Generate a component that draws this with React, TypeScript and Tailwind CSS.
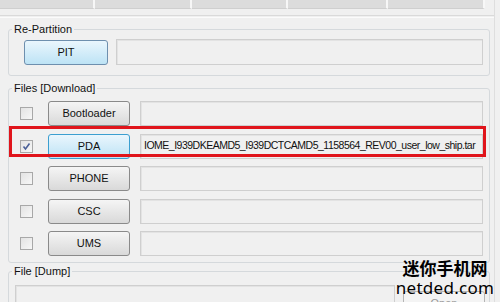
import React from "react";

const font = { fontFamily: '"Liberation Sans", Arial, sans-serif' };

function WinButton({ label, active, className = "" }: { label: string; active?: boolean; className?: string }) {
  return (
    <div
      className={
        "shrink-0 flex items-center justify-center rounded-[3px] border text-[11px] text-[#111] " +
        (active
          ? "border-[#3c9fd0] bg-gradient-to-b from-[#eaf6fd] to-[#bde3f5] "
          : "border-[#8a8a8a] bg-gradient-to-b from-[#f5f5f5] to-[#d9d9d9] ") +
        className
      }
    >
      {label}
    </div>
  );
}

function Field({ text, className = "" }: { text?: string; className?: string }) {
  return (
    <div
      className={
        "flex-1 min-w-0 flex items-center border border-[#cfcfcf] bg-[#f0f0f0] shadow-[inset_1px_1px_0_#e3e3e3] px-[3px] text-[10.5px] tracking-[-0.5px] text-[#111] whitespace-nowrap overflow-hidden " +
        className
      }
    >
      {text}
    </div>
  );
}

function CheckBox({ checked }: { checked?: boolean }) {
  return (
    <div className="shrink-0 w-[13px] h-[13px] border border-[#a8a8a8] bg-gradient-to-br from-[#e3e3e3] to-[#f7f7f7] flex items-center justify-center">
      {checked && (
        <svg width="9" height="9" viewBox="0 0 9 9">
          <path d="M1.5 4.5 L3.5 7 L7.5 1.5" fill="none" stroke="#4a5f97" strokeWidth="1.6" />
        </svg>
      )}
    </div>
  );
}

function Group({ title, className = "", children }: { title: string; className?: string; children?: React.ReactNode }) {
  return (
    <fieldset className={"border border-[#d5d9dc] rounded-[3px] mx-[8px] w-[482px] min-w-0 " + className}>
      <legend className="ml-[3px] px-[2px] text-[11px] leading-[13px] text-[#111]">{title}</legend>
      {children}
    </fieldset>
  );
}

export default function App() {
  const rows = [
    { label: "Bootloader" },
    { label: "PDA", checked: true, active: true, text: "IOME_I939DKEAMD5_I939DCTCAMD5_1158564_REV00_user_low_ship.tar" },
    { label: "PHONE" },
    { label: "CSC" },
    { label: "UMS" },
  ];

  return (
    <div className="relative w-[500px] h-[302px] overflow-hidden bg-[#f0f0f0]" style={font}>
      <div className="w-[495px] h-full border-r border-[#dedede]">
        {/* top tab strip */}
        <div className="flex h-[9px]">
          {[95, 97, 96, 100, 97].map((w, i) => (
            <div key={i} style={{ width: w }} className="h-full bg-[#dcdcdc] border-r-2 border-b border-r-[#f7f7f7] border-b-[#cfcfcf]" />
          ))}
        </div>
        <div className="h-[6px]" />
        <div className="h-[3px] border-t border-b border-t-[#dadada] border-b-[#fbfbfb]" />
        <div className="h-[5px]" />

        <Group title="Re-Partition" className="h-[53px]">
          <div className="flex items-start gap-[8px] pl-[15px] pr-[6px] pt-[3px]">
            <WinButton label="PIT" active className="w-[84px] h-[25px] mt-[1px] border-[#6e8fae]" />
            <Field className="h-[26px]" />
          </div>
        </Group>

        <div className="h-[6px]" />

        <Group title="Files [Download]" className="h-[181px]">
          <div className="flex flex-col gap-[7.5px] pt-[6px]">
            {rows.map((r) => (
              <div key={r.label} className="flex items-center h-[25px] pl-[11px] pr-[6px]">
                <CheckBox checked={r.checked} />
                <div className="w-[15px] shrink-0" />
                <WinButton label={r.label} active={r.active} className="w-[82px] h-[25px]" />
                <div className="w-[10px] shrink-0" />
                <Field text={r.text} className="h-[25px]" />
              </div>
            ))}
          </div>
        </Group>

        <div className="h-[2px]" />

        <Group title="File [Dump]" className="h-[60px]">
          <div className="flex items-start gap-[8px] pl-[6px] pr-[4px] pt-[7px]">
            <Field className="h-[30px]" />
            <div className="shrink-0 w-[82px] h-[25px] mt-[6px] flex items-center justify-center rounded-[3px] border border-[#b5b5b5] bg-[#f4f4f4] text-[11px] text-[#9a9a9a]">
              Open
            </div>
          </div>
        </Group>
      </div>

      {/* red highlight */}
      <div className="absolute left-[9px] top-[126px] w-[477px] h-[31px] border-[3px] border-[#e0141b]" />

      {/* watermark */}
      <div className="absolute left-[400px] top-[257px] w-[90px] flex flex-col items-center leading-none text-black">
        <span className="text-[17px] font-bold leading-[22px]" style={{ fontFamily: '"Noto Sans CJK SC", sans-serif' }}>
          迷你手机网
        </span>
        <span className="text-[17px] leading-[18px] tracking-[0.3px]" style={{ fontFamily: '"Noto Sans", "Open Sans", sans-serif' }}>
          netded.com
        </span>
      </div>
    </div>
  );
}
